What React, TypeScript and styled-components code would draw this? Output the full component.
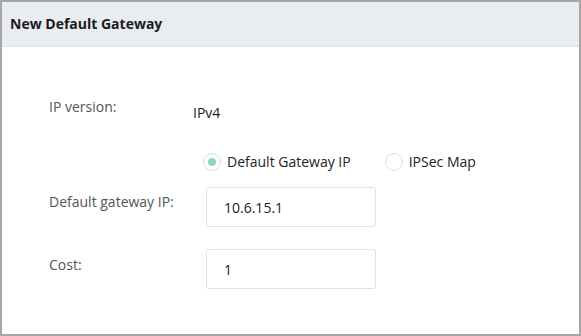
import React from "react";
import styled, { createGlobalStyle } from "styled-components";

const Global = createGlobalStyle`
  html, body { margin: 0; padding: 0; background: #fff; }
  body { font-family: "Open Sans", "Liberation Sans", sans-serif; }
  * { box-sizing: border-box; }
`;

const Frame = styled.div`
  width: 581px;
  height: 336px;
  border: 2px solid #a7a7a7;
  background: #fff;
  display: flex;
  flex-direction: column;
`;

const Header = styled.div`
  height: 45px;
  background: #e9ecf1;
  border-bottom: 1px solid #dcdfe4;
  display: flex;
  align-items: center;
  padding: 0 0 1px 8px;
`;

const Title = styled.h1`
  margin: 0;
  font-size: 14px;
  font-weight: 700;
  color: #1b1b1b;
`;

const Body = styled.div`
  display: flex;
  flex-direction: column;
  padding: 51px 0 0 47px;
`;

const Row = styled.div<{ $mt?: number }>`
  display: flex;
  align-items: flex-start;
  margin-top: ${(p) => p.$mt ?? 0}px;
`;

const Label = styled.div<{ $pt?: number }>`
  width: 157px;
  flex: none;
  font-size: 14px;
  color: #555;
  line-height: 18px;
  padding-top: ${(p) => p.$pt ?? 0}px;
`;

const Value = styled.div`
  margin-left: -13px;
  padding-top: 6px;
  font-size: 14px;
  color: #222;
  line-height: 18px;
`;

const RadioGroup = styled.div`
  display: flex;
  align-items: center;
  margin-left: -3px;
`;

const RadioLabel = styled.label`
  display: flex;
  align-items: center;
  font-size: 14px;
  color: #222;
  line-height: 18px;
  margin-right: 34px;
`;

const RadioCircle = styled.span<{ $checked?: boolean }>`
  width: 18px;
  height: 18px;
  border-radius: 50%;
  border: 1px solid #dcdcdc;
  background: #fff;
  display: inline-flex;
  align-items: center;
  justify-content: center;
  margin-right: 6px;
  &::after {
    content: "";
    width: 8px;
    height: 8px;
    border-radius: 50%;
    background: ${(p) => (p.$checked ? "#8fd5c1" : "transparent")};
  }
`;

const Input = styled.div`
  width: 170px;
  height: 40px;
  border: 1px solid #e1e1e1;
  border-radius: 3px;
  padding: 0 0 0 17px;
  display: flex;
  align-items: center;
  font-size: 14px;
  color: #222;
`;

export default function App() {
  return (
    <>
      <Global />
      <Frame>
        <Header>
          <Title>New Default Gateway</Title>
        </Header>
        <Body>
          <Row>
            <Label>IP version:</Label>
            <Value>IPv4</Value>
          </Row>
          <Row $mt={31}>
            <Label />
            <RadioGroup>
              <RadioLabel>
                <RadioCircle $checked />
                Default Gateway IP
              </RadioLabel>
              <RadioLabel>
                <RadioCircle />
                IPSec Map
              </RadioLabel>
            </RadioGroup>
          </Row>
          <Row $mt={16}>
            <Label $pt={6}>Default gateway IP:</Label>
            <Input>10.6.15.1</Input>
          </Row>
          <Row $mt={22}>
            <Label $pt={7}>Cost:</Label>
            <Input>1</Input>
          </Row>
        </Body>
      </Frame>
    </>
  );
}
